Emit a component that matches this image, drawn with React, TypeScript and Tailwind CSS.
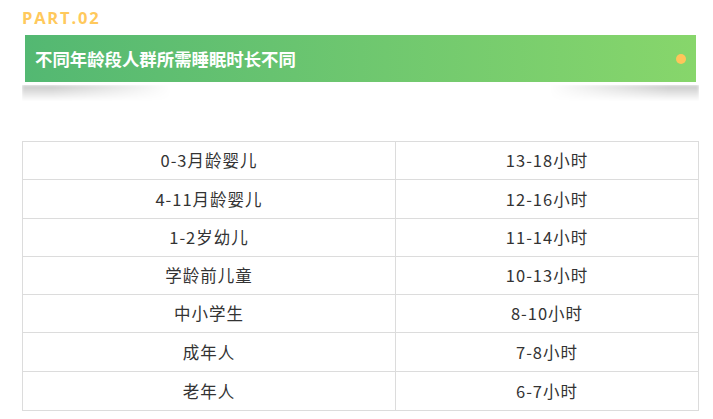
import React from "react";

const rows: [string, string][] = [
  ["0-3月龄婴儿", "13-18小时"],
  ["4-11月龄婴儿", "12-16小时"],
  ["1-2岁幼儿", "11-14小时"],
  ["学龄前儿童", "10-13小时"],
  ["中小学生", "8-10小时"],
  ["成年人", "7-8小时"],
  ["老年人", "6-7小时"],
];

export default function App() {
  return (
    <div className="w-[713px] h-[419px] bg-white overflow-hidden font-['Noto_Sans','Noto_Sans_CJK_SC',sans-serif]">
      <div className="pl-[22px] pt-[7px] h-[35px]">
        <div className="text-[16.5px] leading-[22px] font-bold tracking-[1.8px] text-[#ffc95c] font-['Open_Sans','Noto_Sans',sans-serif]">
          PART.02
        </div>
      </div>
      <div className="ml-[25px] w-[671px] h-[47px] flex items-center justify-between pl-[10px] pr-[10px] bg-gradient-to-r from-[#53b872] to-[#87d66b]">
        <span className="text-white font-bold text-[17.4px] leading-none font-['Noto_Sans_CJK_SC',sans-serif]">
          不同年龄段人群所需睡眠时长不同
        </span>
        <span className="w-[10px] h-[10px] rounded-full bg-[#ffc55a]" />
      </div>
      <div className="mt-[3px] ml-[22px] w-[677px] h-[16px] flex justify-between">
        <div className="w-[150px] h-full bg-gradient-to-b from-[rgba(0,0,0,0.22)] to-transparent [mask-image:linear-gradient(to_right,black_20%,transparent)] blur-[1.5px]" />
        <div className="w-[150px] h-full bg-gradient-to-b from-[rgba(0,0,0,0.22)] to-transparent [mask-image:linear-gradient(to_left,black_20%,transparent)] blur-[1.5px]" />
      </div>
      <div className="mt-[40px] ml-[22px] w-[677px] border border-[#dcdcdc] flex flex-col text-[#333] text-[16.5px] tracking-[1px] font-['Noto_Sans_CJK_SC',sans-serif]">
        {rows.map(([a, b], i) => (
          <div
            key={i}
            className={`flex h-[38.3px] ${i < rows.length - 1 ? "border-b border-[#dcdcdc]" : ""}`}
          >
            <div className="w-[373px] border-r border-[#dcdcdc] flex items-center justify-center">
              {a}
            </div>
            <div className="flex-1 flex items-center justify-center">{b}</div>
          </div>
        ))}
      </div>
    </div>
  );
}
